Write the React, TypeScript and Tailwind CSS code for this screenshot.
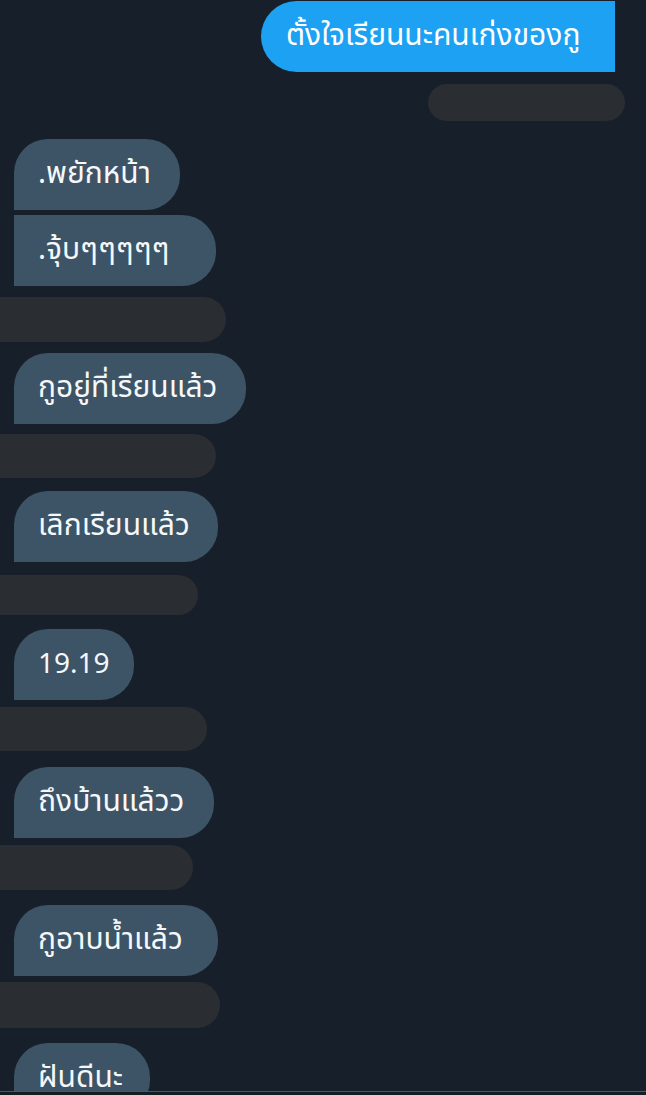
import React from 'react';

type Item =
  | { kind: 'me'; text: string }
  | { kind: 'bar'; w: string; mt: string; h: string; right?: boolean }
  | { kind: 'them'; text: string; w: string; mt: string; square?: boolean; small?: boolean };

const items: Item[] = [
  { kind: 'me', text: 'ตั้งใจเรียนนะคนเก่งของกู' },
  { kind: 'bar', w: 'w-[197px]', mt: 'mt-[12px]', h: 'h-[37px]', right: true },
  { kind: 'them', text: '.พยักหน้า', w: 'w-[166px]', mt: 'mt-[18px]' },
  { kind: 'them', text: '.จุ้บๆๆๆๆๆ', w: 'w-[202px]', mt: 'mt-[5px]', square: true },
  { kind: 'bar', w: 'w-[226px]', mt: 'mt-[11px]', h: 'h-[45px]' },
  { kind: 'them', text: 'กูอยู่ที่เรียนแล้ว', w: 'w-[232px]', mt: 'mt-[11px]' },
  { kind: 'bar', w: 'w-[216px]', mt: 'mt-[10px]', h: 'h-[44px]' },
  { kind: 'them', text: 'เลิกเรียนแล้ว', w: 'w-[204px]', mt: 'mt-[13px]' },
  { kind: 'bar', w: 'w-[198px]', mt: 'mt-[13px]', h: 'h-[40px]' },
  { kind: 'them', text: '19.19', w: 'w-[120px]', mt: 'mt-[14px]', small: true },
  { kind: 'bar', w: 'w-[207px]', mt: 'mt-[7px]', h: 'h-[44px]' },
  { kind: 'them', text: 'ถึงบ้านแล้วว', w: 'w-[200px]', mt: 'mt-[16px]' },
  { kind: 'bar', w: 'w-[193px]', mt: 'mt-[7px]', h: 'h-[45px]' },
  { kind: 'them', text: 'กูอาบน้ำแล้ว', w: 'w-[204px]', mt: 'mt-[15px]' },
  { kind: 'bar', w: 'w-[220px]', mt: 'mt-[6px]', h: 'h-[46px]' },
  { kind: 'them', text: 'ฝันดีนะ', w: 'w-[136px]', mt: 'mt-[15px]' },
];

const font = { fontFamily: '"Noto Sans Thai", "Noto Sans", "DejaVu Sans", sans-serif' };

export default function App() {
  return (
    <div className="w-[646px] h-[1095px] bg-[#17202a] overflow-hidden relative" style={font}>
      <div className="h-[1091px] overflow-hidden flex flex-col pt-[1px]">
        {items.map((it, i) => {
          if (it.kind === 'me') {
            return (
              <div
                key={i}
                className="self-end mr-[31px] h-[71px] w-[354px] shrink-0 bg-[#1da1f2] rounded-l-[36px] flex items-center pl-[25px] text-[30px] text-white whitespace-nowrap"
              >
                {it.text}
              </div>
            );
          }
          if (it.kind === 'bar') {
            return (
              <div
                key={i}
                className={`${it.w} ${it.h} ${it.mt} shrink-0 bg-[#2a2d31] ${
                  it.right ? 'self-end mr-[21px] rounded-full' : 'rounded-r-full'
                }`}
              />
            );
          }
          return (
            <div
              key={i}
              className={`${it.w} ${it.mt} ml-[14px] h-[71px] shrink-0 bg-[#3d5466] flex items-center pl-[24px] text-[#f5f8fa] whitespace-nowrap ${
                it.small ? 'text-[28px]' : 'text-[30px]'
              } ${it.square ? 'rounded-r-[34px]' : 'rounded-r-[34px] rounded-tl-[34px]'}`}
            >
              {it.text}
            </div>
          );
        })}
      </div>
      <div className="h-[1px] bg-[#4b5966]" />
      <div className="h-[3px] bg-[#141c24]" />
    </div>
  );
}
